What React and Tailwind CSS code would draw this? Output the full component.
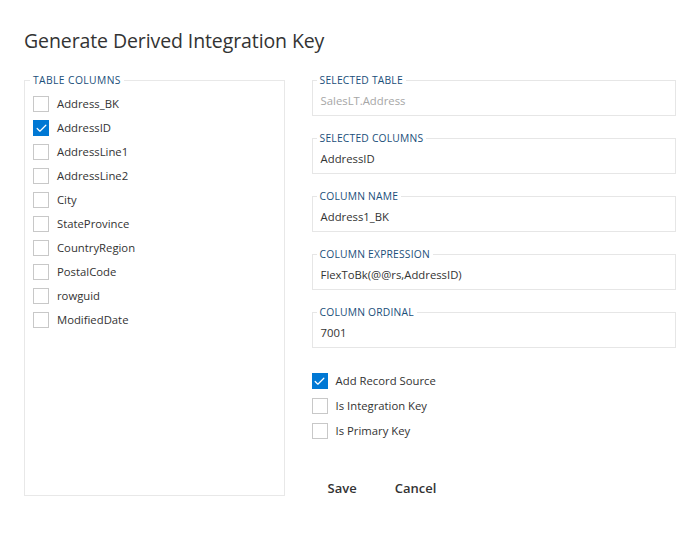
import { Check } from 'lucide-react';

const tableColumns = [
  { name: 'Address_BK', checked: false },
  { name: 'AddressID', checked: true },
  { name: 'AddressLine1', checked: false },
  { name: 'AddressLine2', checked: false },
  { name: 'City', checked: false },
  { name: 'StateProvince', checked: false },
  { name: 'CountryRegion', checked: false },
  { name: 'PostalCode', checked: false },
  { name: 'rowguid', checked: false },
  { name: 'ModifiedDate', checked: false },
];

const fields = [
  { label: 'Selected Table', value: 'SalesLT.Address', disabled: true },
  { label: 'Selected Columns', value: 'AddressID' },
  { label: 'Column Name', value: 'Address1_BK' },
  { label: 'Column Expression', value: 'FlexToBk(@@rs,AddressID)' },
  { label: 'Column Ordinal', value: '7001' },
];

function Box({ checked }) {
  return checked ? (
    <span className="w-4 h-4 flex items-center justify-center bg-[#0078d4] border border-[#0078d4] shrink-0">
      <Check size={13} strokeWidth={2.2} className="text-white" />
    </span>
  ) : (
    <span className="w-4 h-4 border border-[#c8c8c8] bg-white shrink-0" />
  );
}

function Field({ label, value, disabled }) {
  return (
    <fieldset className="border border-[#e6e6e6] h-[42px] px-2">
      <legend className="text-[10.3px] leading-[12px] uppercase tracking-[0.2px] text-[#1b4f7a] px-[3px] -ml-[4px]">{label}</legend>
      <div className={`text-[11.3px] leading-[16px] pt-[7px] ${disabled ? 'text-[#a6a6a6]' : 'text-[#333]'}`}>{value}</div>
    </fieldset>
  );
}

export default function App() {
  return (
    <div className="w-[700px] h-[540px] bg-white font-['Open_Sans',sans-serif] text-[#333] px-6 pt-[28px]">
      <h1 className="text-[19.5px] leading-[26px] text-[#333] tracking-[-0.1px]">Generate Derived Integration Key</h1>
      <div className="flex gap-[27px] mt-[20px]">
        <fieldset className="w-[261px] h-[422px] border border-[#e8e8e8] px-2">
          <legend className="text-[10.3px] leading-[12px] uppercase tracking-[0.4px] text-[#1b4f7a] px-[3px] -ml-[3px]">Table Columns</legend>
          <div className="flex flex-col pt-[6px]">
            {tableColumns.map((c) => (
              <label key={c.name} className="flex items-center gap-[8px] h-6 text-[11.3px] text-[#333]">
                <Box checked={c.checked} />
                <span>{c.name}</span>
              </label>
            ))}
          </div>
        </fieldset>
        <div className="w-[365px] flex flex-col">
          <div className="flex flex-col gap-[16px]">
            {fields.map((f) => (
              <Field key={f.label} {...f} />
            ))}
          </div>
          <div className="flex flex-col gap-[9px] mt-[25px]">
            {['Add Record Source', 'Is Integration Key', 'Is Primary Key'].map((l, i) => (
              <label key={l} className="flex items-center gap-[8px] leading-[16px] text-[11.3px] text-[#333]">
                <Box checked={i === 0} />
                <span>{l}</span>
              </label>
            ))}
          </div>
          <div className="flex gap-[20px] mt-[40px] pl-[7px]">
            <button className="px-[9px] text-[13px] font-semibold text-[#333]">Save</button>
            <button className="px-[9px] text-[13px] font-semibold text-[#333]">Cancel</button>
          </div>
        </div>
      </div>
    </div>
  );
}
